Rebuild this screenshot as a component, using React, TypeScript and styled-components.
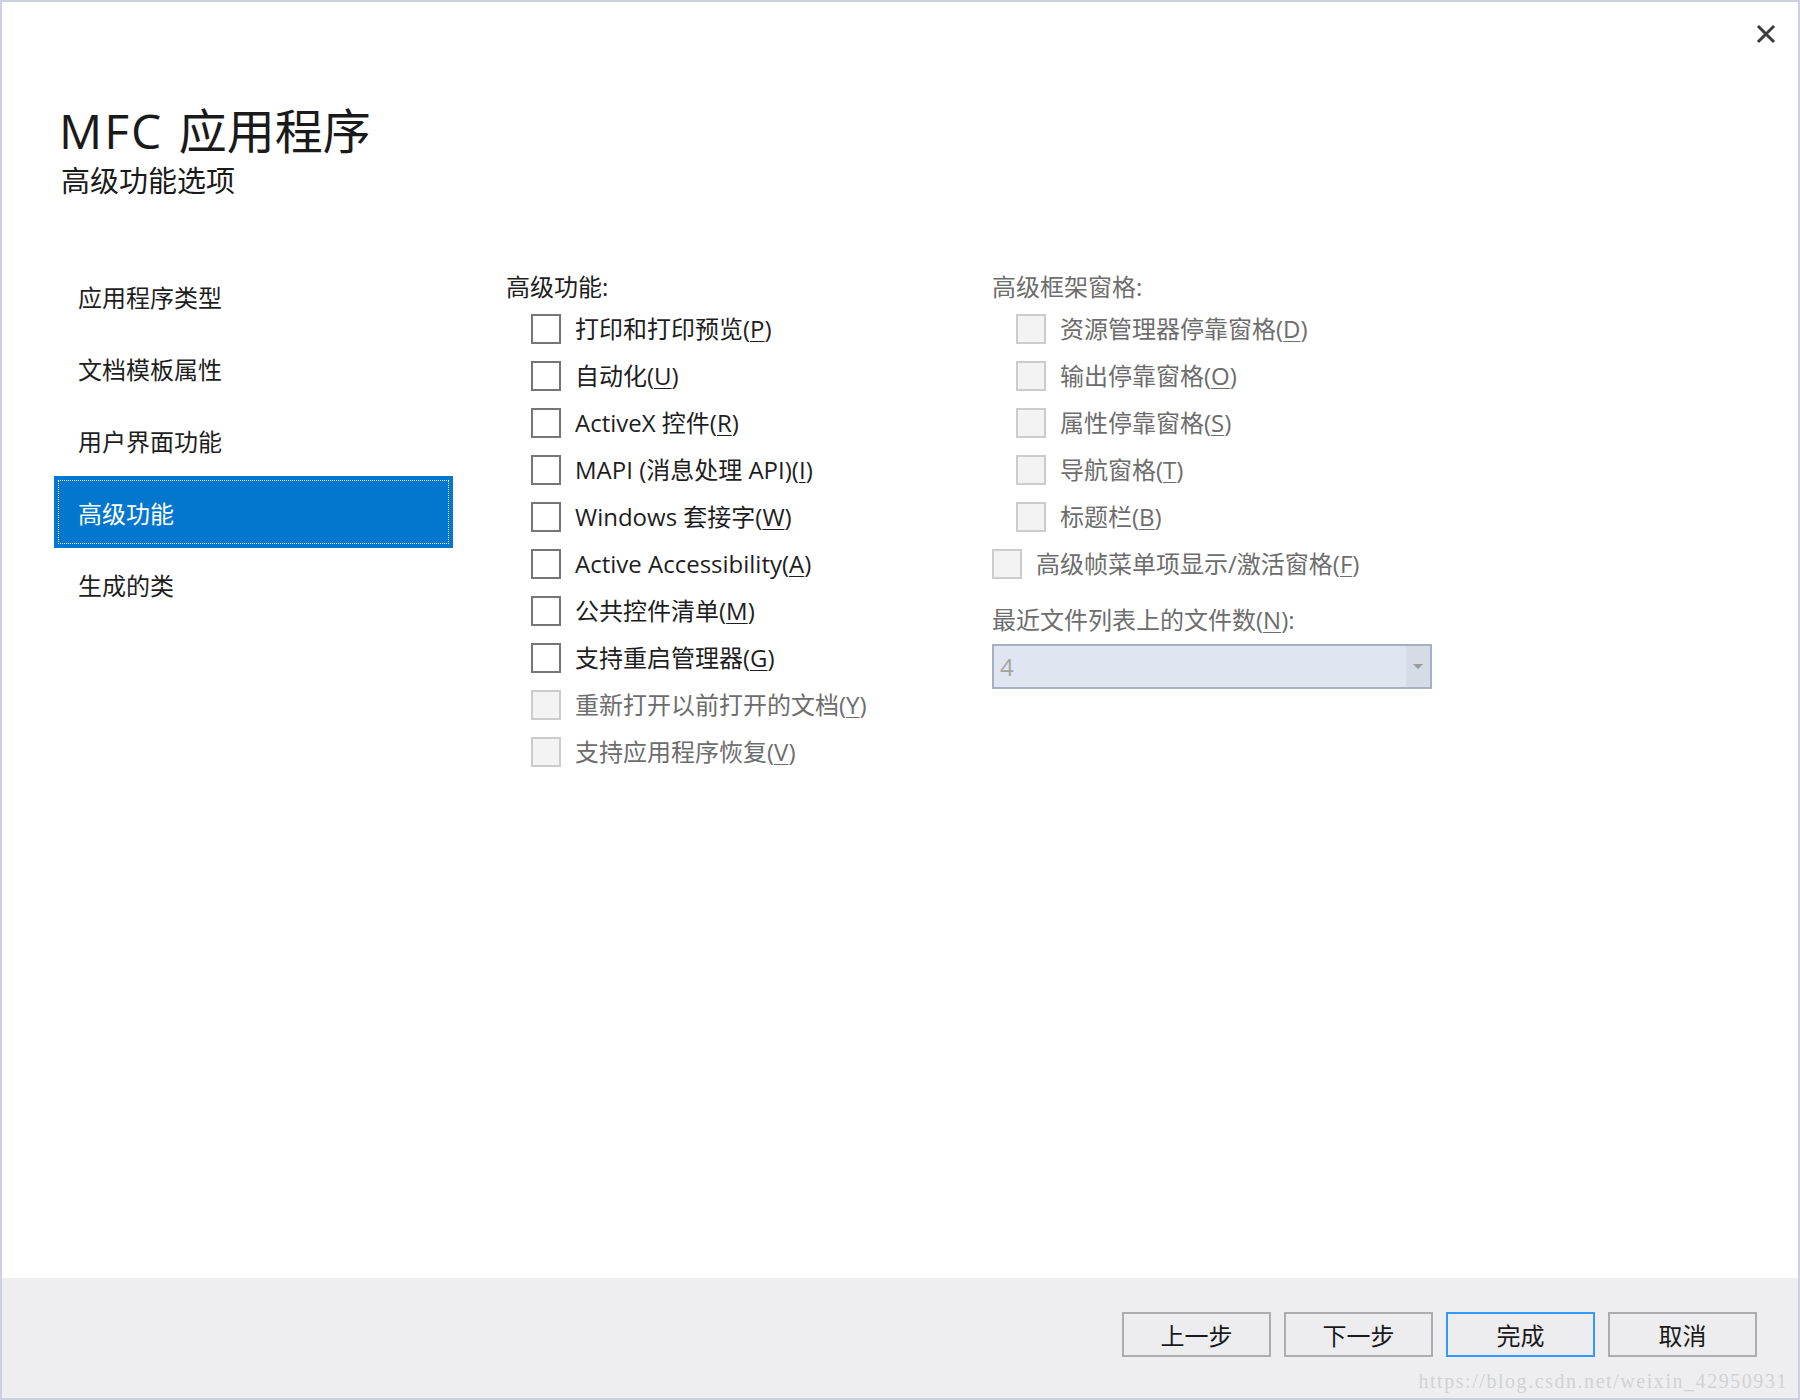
import React from 'react';
import styled, { createGlobalStyle } from 'styled-components';

type Option = {
  text: string;
  hotkey: string;
  disabled?: boolean;
  indent?: boolean;
};

const navItems = ['应用程序类型', '文档模板属性', '用户界面功能', '高级功能', '生成的类'];

const advancedOptions: Option[] = [
  { text: '打印和打印预览', hotkey: 'P' },
  { text: '自动化', hotkey: 'U' },
  { text: 'ActiveX 控件', hotkey: 'R' },
  { text: 'MAPI (消息处理 API)', hotkey: 'I' },
  { text: 'Windows 套接字', hotkey: 'W' },
  { text: 'Active Accessibility', hotkey: 'A' },
  { text: '公共控件清单', hotkey: 'M' },
  { text: '支持重启管理器', hotkey: 'G' },
  { text: '重新打开以前打开的文档', hotkey: 'Y', disabled: true },
  { text: '支持应用程序恢复', hotkey: 'V', disabled: true },
];

const frameOptions: Option[] = [
  { text: '资源管理器停靠窗格', hotkey: 'D', disabled: true, indent: true },
  { text: '输出停靠窗格', hotkey: 'O', disabled: true, indent: true },
  { text: '属性停靠窗格', hotkey: 'S', disabled: true, indent: true },
  { text: '导航窗格', hotkey: 'T', disabled: true, indent: true },
  { text: '标题栏', hotkey: 'B', disabled: true, indent: true },
  { text: '高级帧菜单项显示/激活窗格', hotkey: 'F', disabled: true },
];

const OptionRow: React.FC<{ option: Option }> = ({ option }) => (
  <Row $indent={option.indent}>
    <Box $disabled={option.disabled} />
    <RowLabel $disabled={option.disabled}>
      {option.text}(<u>{option.hotkey}</u>)
    </RowLabel>
  </Row>
);

const App: React.FC = () => {
  return (
    <>
      <GlobalStyle />
      <Dialog>
        <Body>
          <TopBar>
            <CloseButton aria-label='关闭'>
              <svg width='20' height='20' viewBox='0 0 20 20'>
                <path
                  d='M3 3 L17 17 M17 3 L3 17'
                  stroke='#3c3c3c'
                  strokeWidth='3'
                  strokeLinecap='square'
                  fill='none'
                />
              </svg>
            </CloseButton>
          </TopBar>
          <Header>
            <Title>
              <Latin>MFC </Latin>应用程序
            </Title>
            <Subtitle>高级功能选项</Subtitle>
          </Header>
          <Content>
            <Nav>
              {navItems.map((item) => (
                <NavItem key={item} $active={item === '高级功能'}>
                  {item}
                </NavItem>
              ))}
            </Nav>
            <Column $width={486}>
              <GroupTitle>高级功能:</GroupTitle>
              <Indented>
                {advancedOptions.map((o) => (
                  <OptionRow key={o.hotkey} option={o} />
                ))}
              </Indented>
            </Column>
            <Column $width={460}>
              <GroupTitle $disabled>高级框架窗格:</GroupTitle>
              {frameOptions.map((o) => (
                <OptionRow key={o.hotkey} option={o} />
              ))}
              <FieldLabel>
                最近文件列表上的文件数(<u>N</u>):
              </FieldLabel>
              <Combo>
                <ComboValue>4</ComboValue>
                <ComboArrow>
                  <svg width='10' height='6' viewBox='0 0 10 6'>
                    <path d='M0 0 L10 0 L5 5 Z' fill='#9a9a9a' />
                  </svg>
                </ComboArrow>
              </Combo>
            </Column>
          </Content>
        </Body>
        <Footer>
          <Button>上一步</Button>
          <Button>下一步</Button>
          <Button $primary>完成</Button>
          <Button>取消</Button>
          <Watermark>https://blog.csdn.net/weixin_42950931</Watermark>
        </Footer>
      </Dialog>
    </>
  );
};

export default App;

const GlobalStyle = createGlobalStyle`
  html, body {
    margin: 0;
    padding: 0;
    background: #ffffff;
  }
  body {
    font-family: "Open Sans", "Noto Sans CJK SC", sans-serif;
    font-weight: 400;
    color: #1e1e1e;
  }
  u {
    text-decoration-thickness: 1px;
    text-underline-offset: 3px;
  }
`;

const Dialog = styled.div`
  width: 1800px;
  height: 1400px;
  box-sizing: border-box;
  border: 2px solid #cdd0de;
  display: flex;
  flex-direction: column;
  background: #ffffff;
`;

const Body = styled.div`
  flex: 1;
  display: flex;
  flex-direction: column;
`;

const TopBar = styled.div`
  height: 70px;
  display: flex;
  justify-content: flex-end;
  align-items: flex-start;
  padding: 22px 22px 0 0;
  box-sizing: border-box;
`;

const CloseButton = styled.button`
  width: 20px;
  height: 20px;
  padding: 0;
  border: none;
  background: transparent;
  display: flex;
  cursor: pointer;
`;

const Header = styled.div`
  margin-top: 30px;
  padding-left: 59px;
`;

const Title = styled.h1`
  margin: 0 0 0 -2px;
  font-size: 48px;
  font-weight: 400;
  line-height: 58px;
  color: #1a1a1a;
`;

const Latin = styled.span`
  letter-spacing: 2px;
  word-spacing: 1px;
`;

const Subtitle = styled.h2`
  margin: 3px 0 0;
  font-size: 29px;
  font-weight: 400;
  line-height: 36px;
  color: #1a1a1a;
`;

const Content = styled.div`
  display: flex;
  align-items: flex-start;
  margin-top: 61px;
  padding-left: 52px;
`;

const Nav = styled.div`
  width: 399px;
  margin-right: 53px;
  display: flex;
  flex-direction: column;
`;

const NavItem = styled.div<{ $active?: boolean }>`
  height: 72px;
  display: flex;
  align-items: center;
  padding-left: 24px;
  font-size: 24px;
  color: ${(p) => (p.$active ? '#ffffff' : '#1e1e1e')};
  background: ${(p) => (p.$active ? '#0377cd' : 'transparent')};
  outline: ${(p) => (p.$active ? '1px dotted #ffffff' : 'none')};
  outline-offset: -5px;
`;

const Column = styled.div<{ $width: number }>`
  width: ${(p) => p.$width}px;
  margin-top: 11px;
  display: flex;
  flex-direction: column;
`;

const GroupTitle = styled.div<{ $disabled?: boolean }>`
  height: 34px;
  line-height: 32px;
  font-size: 24px;
  color: ${(p) => (p.$disabled ? '#6d6d6d' : '#1e1e1e')};
`;

const Indented = styled.div`
  display: flex;
  flex-direction: column;
  padding-left: 25px;
`;

const Row = styled.div<{ $indent?: boolean }>`
  height: 47px;
  display: flex;
  align-items: center;
  gap: 14px;
  padding-left: ${(p) => (p.$indent ? '24px' : '0')};
`;

const Box = styled.span<{ $disabled?: boolean }>`
  width: 30px;
  height: 30px;
  box-sizing: border-box;
  flex-shrink: 0;
  border: 2px solid ${(p) => (p.$disabled ? '#cccccc' : '#767676')};
  background: ${(p) => (p.$disabled ? '#f3f3f3' : '#ffffff')};
`;

const RowLabel = styled.span<{ $disabled?: boolean }>`
  font-size: 24px;
  line-height: 32px;
  white-space: nowrap;
  color: ${(p) => (p.$disabled ? '#6d6d6d' : '#1e1e1e')};
`;

const FieldLabel = styled.div`
  margin-top: 17px;
  height: 32px;
  line-height: 32px;
  font-size: 24px;
  color: #6d6d6d;
`;

const Combo = styled.div`
  margin-top: 8px;
  width: 440px;
  height: 45px;
  box-sizing: border-box;
  border: 2px solid #a7b0c0;
  background: #e0e6f1;
  display: flex;
  align-items: stretch;
`;

const ComboValue = styled.div`
  flex: 1;
  padding-left: 6px;
  display: flex;
  align-items: center;
  font-size: 24px;
  color: #a3a3a3;
`;

const ComboArrow = styled.div`
  width: 24px;
  display: flex;
  align-items: center;
  justify-content: center;
  background: #d6dce6;
`;

const Footer = styled.div`
  position: relative;
  height: 120px;
  box-sizing: border-box;
  background: #eeeef1;
  display: flex;
  justify-content: flex-end;
  align-items: flex-start;
  gap: 13px;
  padding: 34px 41px 0 0;
`;

const Button = styled.button<{ $primary?: boolean }>`
  width: 149px;
  height: 45px;
  box-sizing: border-box;
  border: 2px solid ${(p) => (p.$primary ? '#3399ff' : '#adadad')};
  background: #ededf0;
  font-family: "Open Sans", "Noto Sans CJK SC", sans-serif;
  font-weight: 400;
  font-size: 24px;
  color: #1a1a1a;
  padding: 0;
  cursor: pointer;
`;

const Watermark = styled.div`
  position: absolute;
  right: 10px;
  bottom: 5px;
  font-family: "Liberation Serif", serif;
  font-size: 20px;
  line-height: 24px;
  letter-spacing: 1.55px;
  color: #d2d2d2;
`;
